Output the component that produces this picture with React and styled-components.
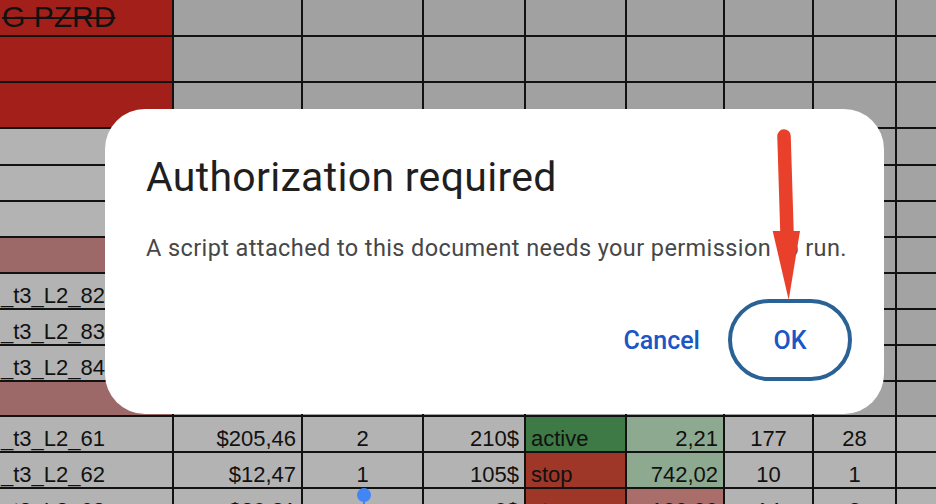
import React from "react";
import styled, { createGlobalStyle } from "styled-components";

const Global = createGlobalStyle`
  html, body { margin: 0; padding: 0; width: 936px; height: 504px; overflow: hidden; background: #111; }
  #root { width: 936px; height: 504px; }
  * { box-sizing: border-box; }
`;

const Page = styled.div`
  position: relative;
  width: 936px;
  height: 504px;
  overflow: hidden;
  font-family: "Liberation Sans", Arial, sans-serif;
`;

const Sheet = styled.div`
  display: grid;
  grid-template-columns: 172px 127px 119px 100px 99px 96px 87px 81px 1fr;
  grid-template-rows: 35px 44px 44px 35px 34px 34px 34px 34px 34px 34px 33px 34px 34px 34px;
  gap: 2px;
  background: #121212;
  width: 936px;
`;

const Cell = styled.div`
  background: ${(p) => p.$bg};
  display: flex;
  align-items: flex-end;
  justify-content: ${(p) => (p.$align === "right" ? "flex-end" : p.$align === "center" ? "center" : "flex-start")};
  padding: 0 ${(p) => (p.$align === "right" ? "5px" : "0")} 0 ${(p) => (p.$align === "left" ? "5px" : p.$align === "edge" ? "1px" : "0")};
  font-size: 22px;
  line-height: 25px;
  color: #111;
  white-space: nowrap;
  overflow: hidden;
`;

const HeaderCell = styled(Cell)`
  align-items: flex-start;
  font-size: 30px;
  line-height: 33px;
  padding-left: 2px;
  text-decoration: line-through;
  text-decoration-thickness: 2px;
`;

const Dialog = styled.div`
  position: absolute;
  left: 105px;
  top: 109px;
  width: 779px;
  height: 305px;
  background: #fff;
  border-radius: 40px;
  display: flex;
  flex-direction: column;
  padding: 44px 32px 33px 41px;
  font-family: Roboto, "Noto Sans", sans-serif;
`;

const Title = styled.h2`
  margin: 0;
  font-size: 41px;
  line-height: 48px;
  font-weight: 400;
  letter-spacing: 0.3px;
  color: #1f1f1f;
`;

const Message = styled.p`
  margin: 33px 0 0;
  font-size: 23.5px;
  line-height: 28px;
  letter-spacing: 0.4px;
  color: #474747;
  white-space: nowrap;
`;

const Actions = styled.div`
  margin-top: auto;
  display: flex;
  justify-content: flex-end;
  align-items: center;
  gap: 28px;
`;

const TextButton = styled.button`
  background: transparent;
  border: none;
  padding: 0;
  font-family: Roboto, "Noto Sans", sans-serif;
  font-size: 25px;
  font-weight: 500;
  color: #1b55c6;
  cursor: pointer;
`;

const OkButton = styled(TextButton)`
  width: 124px;
  height: 82px;
  border: 4px solid #2a6295;
  border-radius: 41px;
  background: #fff;
`;

const Arrow = styled.svg`
  position: absolute;
  left: 765px;
  top: 120px;
  width: 45px;
  height: 185px;
  overflow: visible;
`;

const FillHandle = styled.div`
  position: absolute;
  left: 357px;
  top: 488px;
  width: 14px;
  height: 14px;
  border-radius: 50%;
  background: #4285f4;
  &::after {
    content: "";
    position: absolute;
    left: 6px;
    top: 13px;
    width: 2px;
    height: 6px;
    background: #4285f4;
  }
`;

const GRAY_TOP = "#a1a1a1";
const GRAY_MID = "#a3a3a3";
const GRAY_LIGHT = "#b3b3b3";
const RED = "#a3201a";
const PINK = "#9d6868";
const GREEN = "#3e7a45";
const STOP = "#9f3729";
const MINT = "#8daa90";
const ROSE = "#a96d6a";

const aligns = ["edge", "right", "center", "right", "left", "right", "center", "center", "center"];

const dataRows = [
  ["_t3_L2_61", "$205,46", "2", "210$", "active", "2,21", "177", "28", ""],
  ["_t3_L2_62", "$12,47", "1", "105$", "stop", "742,02", "10", "1", ""],
  ["_t3_L2_63", "$20,21", "", "0$", "stop", "100,00", "14", "2", ""],
];
const statusBg = [GREEN, STOP, STOP];
const valueBg = [MINT, MINT, ROSE];

function buildCells() {
  const cells = [];
  for (let r = 0; r < 3; r++) {
    for (let c = 0; c < 9; c++) {
      if (c === 0 && r === 0) {
        cells.push(
          <HeaderCell key={`h${r}${c}`} $bg={RED}>
            G PZRD
          </HeaderCell>
        );
      } else {
        cells.push(<Cell key={`h${r}${c}`} $bg={c === 0 ? RED : GRAY_TOP} />);
      }
    }
  }
  const midA = [
    { bg: GRAY_LIGHT, t: "" },
    { bg: GRAY_LIGHT, t: "" },
    { bg: GRAY_LIGHT, t: "" },
    { bg: PINK, t: "" },
    { bg: GRAY_LIGHT, t: "_t3_L2_82" },
    { bg: GRAY_LIGHT, t: "_t3_L2_83" },
    { bg: GRAY_LIGHT, t: "_t3_L2_84" },
    { bg: PINK, t: "" },
  ];
  midA.forEach((row, r) => {
    for (let c = 0; c < 9; c++) {
      if (c === 0) {
        cells.push(
          <Cell key={`m${r}${c}`} $bg={row.bg} $align="edge">
            {row.t}
          </Cell>
        );
      } else {
        cells.push(<Cell key={`m${r}${c}`} $bg={GRAY_MID} />);
      }
    }
  });
  dataRows.forEach((row, r) => {
    row.forEach((v, c) => {
      const bg = c === 4 ? statusBg[r] : c === 5 ? valueBg[r] : GRAY_LIGHT;
      cells.push(
        <Cell key={`d${r}${c}`} $bg={bg} $align={aligns[c]}>
          {v}
        </Cell>
      );
    });
  });
  return cells;
}

export default function App() {
  return (
    <>
      <Global />
      <Page>
        <Sheet>{buildCells()}</Sheet>
        <FillHandle />
        <Dialog>
          <Title>Authorization required</Title>
          <Message>A script attached to this document needs your permission to run.</Message>
          <Actions>
            <TextButton>Cancel</TextButton>
            <OkButton>OK</OkButton>
          </Actions>
        </Dialog>
        <Arrow viewBox="0 0 45 185">
          <line x1="19" y1="16" x2="22" y2="113" stroke="#e8402a" strokeWidth="13.5" strokeLinecap="round" />
          <polygon points="7.7,111 35,111 23.7,180" fill="#e8402a" />
        </Arrow>
      </Page>
    </>
  );
}
